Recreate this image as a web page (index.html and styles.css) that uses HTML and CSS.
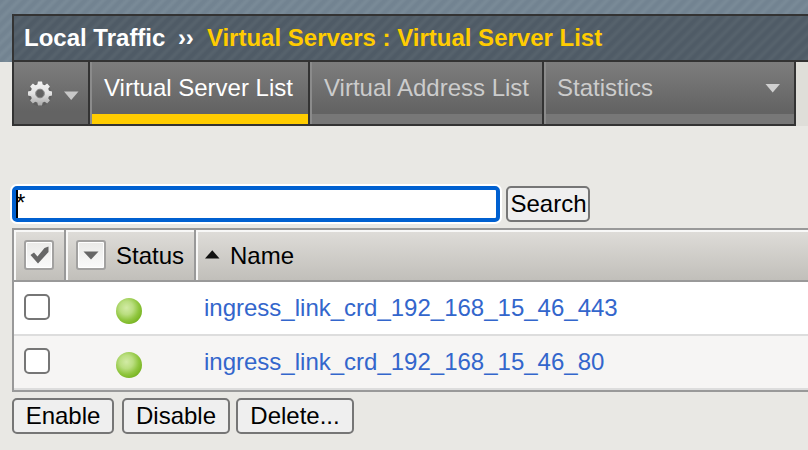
FILE: index.html
```html
<!DOCTYPE html>
<html lang="en">
<head>
<meta charset="utf-8">
<title>Virtual Server List</title>
<link rel="stylesheet" href="styles.css">
</head>
<body>
<header class="banner">
  <h1 class="crumbs"><span>Local Traffic</span><span class="sep">››</span><span class="current">Virtual Servers : Virtual Server List</span></h1>
</header>
<nav class="tabs">
  <div class="gear">
    <svg width="74" height="62" viewBox="0 0 74 62">
      <defs>
        <linearGradient id="metal" x1="0" y1="0" x2="0" y2="1"><stop offset="0" stop-color="#f4f4f4"/><stop offset=".5" stop-color="#e2e2e2"/><stop offset="1" stop-color="#a8a8a8"/></linearGradient>
      </defs>
      <g transform="translate(26 31.500)">
        <circle r="11.5" cy="1" fill="#505050" opacity=".35"/>
        <path fill="url(#metal)" fill-rule="evenodd" d="M-2-12H2L2.700-9 4.800-8.200 7.100-9.900 9.900-7.100 8.200-4.800 9-2.700 12-2V2L9 2.700 8.200 4.800 9.900 7.100 7.100 9.900 4.800 8.200 2.700 9 2 12H-2L-2.700 9-4.800 8.200-7.100 9.900-9.900 7.100-8.200 4.800-9 2.700-12 2V-2L-9-2.700-8.200-4.800-9.900-7.100-7.100-9.900-4.800-8.200-2.700-9ZM4 0A4 4 0 1 0-4 0A4 4 0 1 0 4 0Z"/>
        <circle r="4.300" fill="none" stroke="#777" stroke-width="1"/>
      </g>
      <path d="M50 29.500H64.500L57.200 38Z" fill="#c8c8c8"/>
    </svg>
  </div>
  <div class="tab active">Virtual Server List</div>
  <div class="tab address">Virtual Address List</div>
  <div class="tab stats">Statistics<svg class="caret" width="16" height="9" viewBox="0 0 16 9"><path d="M.5 0H15L7.700 8.500Z" fill="#d0d0d0"/></svg></div>
  <div class="rest"></div>
</nav>
<main>
  <div class="search">
    <div class="field"><i class="cursor"></i><span class="query">*</span></div>
    <button class="go">Search</button>
  </div>
  <div class="grid">
    <div class="head">
      <div class="cell"><span class="tool"><svg width="24" height="24" viewBox="0 0 24 24"><path d="M3.500 12L7 9.500 10.500 13.500 17.500 5 21.500 3.500V9L11 20.500Z" fill="#666"/></svg></span></div>
      <div class="cell"><span class="tool"><svg width="24" height="24" viewBox="0 0 24 24"><path d="M4.500 8.500H19.500L12 16.500Z" fill="#666"/></svg></span><span class="label">Status</span></div>
      <div class="cell"><svg class="sort" width="15" height="9" viewBox="0 0 15 9"><path d="M0 8.500L7.300.2 14.500 8.500Z" fill="#111"/></svg><span>Name</span></div>
    </div>
    <div class="row">
      <span class="check"></span><span class="ball"></span><a>ingress_link_crd_192_168_15_46_443</a>
    </div>
    <div class="row alt">
      <span class="check"></span><span class="ball"></span><a>ingress_link_crd_192_168_15_46_80</a>
    </div>
  </div>
  <div class="actions">
    <button class="enable">Enable</button><button class="disable">Disable</button><button class="delete">Delete...</button>
  </div>
</main>
</body>
</html>
```
FILE: styles.css
```css
* { box-sizing: border-box; }
body {
  margin: 0;
  height: 450px;
  overflow: hidden;
  background: #e9e8e4;
  font: 24px/28px "Liberation Sans", Arial, sans-serif;
  color: #000;
}
svg { display: block; }
.banner {
  height: 62px;
  padding: 14px 0 0 12px;
  background: repeating-linear-gradient(135deg, #728391 0 2px, #798a97 5px 6px, #728391 8.480px);
}
.crumbs {
  display: flex;
  height: 48px;
  margin: 0;
  padding: 8px 0 0 10px;
  border: 2px solid #333;
  border-right: 0;
  background: repeating-linear-gradient(135deg, #4f5b66 0 2px, #56626c 5px 6px, #4f5b66 8.480px);
  color: #fff;
  font-size: 24px;
  line-height: 28px;
  white-space: nowrap;
}
.sep { width: 29px; margin-left: 12.500px; }
.current { color: #fc0; }
.tabs { display: flex; height: 64px; padding-left: 12px; }
.gear {
  width: 78px;
  border: 2px solid #333;
  border-top: 0;
  background: linear-gradient(#7d7d7d, #636363 80%);
}
.tab {
  display: flex;
  width: 220px;
  padding: 12px 0 0 12px;
  border: solid #333;
  border-width: 0 2px 2px 0;
  background:
    linear-gradient(#8b8b8b, #8b8b8b) left / 2px 100% no-repeat,
    linear-gradient(#777, #777) bottom / 100% 10px no-repeat,
    linear-gradient(#7d7d7d, #636363 80%);
  color: #ccc;
  white-space: nowrap;
}
.active {
  padding-left: 14px;
  color: #fff;
  background:
    linear-gradient(#8b8b8b, #8b8b8b) left / 2px 100% no-repeat,
    linear-gradient(#fc0, #fc0) bottom / 100% 10px no-repeat,
    linear-gradient(#7d7d7d, #636363 80%);
}
.address { width: 234px; padding-left: 14px; }
.stats { width: 252px; padding-left: 13px; }
.caret { margin: 10px 13px 0 auto; }
.rest { flex: 1; background: #dfded9; }
main { padding: 60px 0 0 12px; }
.search { display: flex; gap: 6px; height: 36px; }
.field {
  display: flex;
  width: 488px;
  padding: 0;
  border: 4px solid #0060d0;
  border-radius: 5px;
  background: #fff;
  box-shadow: 0 0 0 2px #fff;
}
.cursor { width: 2px; height: 28px; margin-right: -2px; background: #000; }
.query { line-height: 26px; }
button {
  height: 36px;
  padding: 0;
  border: 2px solid #767676;
  border-radius: 5px;
  background: #efefef;
  color: #000;
  font: 24px/28px "Liberation Sans", Arial, sans-serif;
}
.go { width: 84px; padding-left: 1px; }
.grid {
  height: 164px;
  margin-top: 6px;
  border: solid #999;
  border-width: 2px 0 2px 2px;
}
.head {
  display: grid;
  grid-template-columns: 52px 130px 1fr;
  height: 52px;
  border-bottom: 2px solid #999;
}
.cell {
  display: flex;
  align-items: center;
  padding: 2px 0 0 10px;
  border-right: 2px solid #999;
  background: linear-gradient(#dfddd9, #c1bfba);
  box-shadow: inset 2px 2px #f8f8f7;
}
.cell:first-child, .cell:nth-child(2) { padding-top: 0; }
.cell:last-child { padding-left: 9px; border-right: 0; }
.tool {
  width: 30px;
  height: 30px;
  padding: 1px;
  border: 2px solid #a2a1a0;
  border-radius: 3px;
  background: linear-gradient(#eaeae8, #fafafa);
  box-shadow: inset 0 0 0 1px #fff;
}
.label { margin: 2px 0 0 10px; }
.sort { margin: -4px 10px 0 0; }
.row {
  display: grid;
  grid-template-columns: 92px 88px 1fr;
  height: 54px;
  padding: 12px 0 0 10px;
  border-bottom: 2px solid #ddd;
  background: #fff;
}
.alt { background: #f6f5f4; }
.check {
  width: 26px;
  height: 26px;
  border: 2px solid #767676;
  border-radius: 5px;
  background: #fff;
}
.ball {
  width: 26px;
  height: 26px;
  margin-top: 4px;
  border-radius: 50%;
  background: radial-gradient(circle at 40% 38%, #d2eba5 0, #bade80 30%, #90c63f 55%, #7cb726 72%, #5b972b 92%);
}
.row a { color: #36c; }
.actions { display: flex; margin-top: 6px; }
.enable { width: 102px; margin-right: 8px; }
.disable { width: 108px; margin-right: 6px; }
.delete { width: 118px; }
```
